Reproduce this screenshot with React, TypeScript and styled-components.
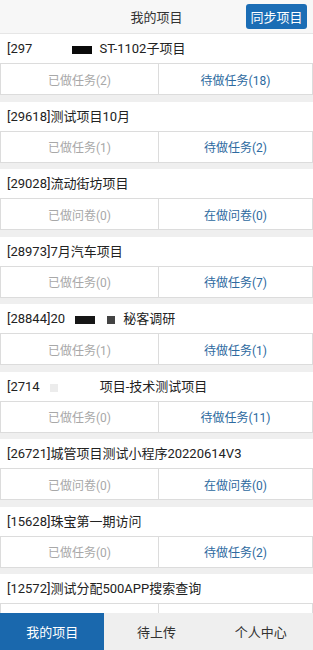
import React from 'react';
import { createGlobalStyle, styled } from 'styled-components';

const GlobalStyle = createGlobalStyle`
  html, body {
    margin: 0;
    padding: 0;
    background: #efefef;
  }
  body {
    font-family: Roboto, "Noto Sans CJK SC", "Noto Sans", sans-serif;
    -webkit-font-smoothing: antialiased;
  }
`;

// a title is text plus the masked-out blocks seen in the screenshot
type Part = string | { w: number; color: string; gap?: number; h?: number };

interface Project {
  title: Part[];
  done: string;
  todo: string;
}

const projects: Project[] = [
  {
    title: ['[297', { w: 20, h: 8, color: '#0a0a0a', gap: 40 }, { w: 0, color: 'transparent', gap: 4 }, ' ST-1102子项目'],
    done: '已做任务(2)',
    todo: '待做任务(18)',
  },
  { title: ['[29618]测试项目10月'], done: '已做任务(1)', todo: '待做任务(2)' },
  { title: ['[29028]流动街坊项目'], done: '已做问卷(0)', todo: '在做问卷(0)' },
  { title: ['[28973]7月汽车项目'], done: '已做任务(0)', todo: '待做任务(7)' },
  {
    title: [
      '[28844]20',
      { w: 20, h: 8, color: '#161616', gap: 10 },
      { w: 8, h: 8, color: '#444', gap: 12 },
      { w: 0, color: 'transparent', gap: 5 },
      ' 秘客调研',
    ],
    done: '已做任务(1)',
    todo: '待做任务(1)',
  },
  {
    title: ['[2714', { w: 8, h: 8, color: '#ececec', gap: 10 }, { w: 0, color: 'transparent', gap: 42 }, '项目-技术测试项目'],
    done: '已做任务(0)',
    todo: '待做任务(11)',
  },
  { title: ['[26721]城管项目测试小程序20220614V3'], done: '已做问卷(0)', todo: '在做问卷(0)' },
  { title: ['[15628]珠宝第一期访问'], done: '已做任务(0)', todo: '待做任务(2)' },
  { title: ['[12572]测试分配500APP搜索查询'], done: '已做任务(0)', todo: '待做任务(0)' },
];

const tabs = ['我的项目', '待上传', '个人中心'];

export default function App() {
  return (
    <>
      <GlobalStyle />
      <Page>
        <Header>
          <span />
          <HeaderTitle>我的项目</HeaderTitle>
          <SyncButton>同步项目</SyncButton>
        </Header>

        <List>
          {projects.map((p, i) => (
            <Card key={i}>
              <CardTitle>
                {p.title.map((part, j) =>
                  typeof part === 'string' ? (
                    <span key={j}>{part}</span>
                  ) : (
                    <Redact key={j} $w={part.w} $h={part.h ?? 8} $color={part.color} $gap={part.gap ?? 0} />
                  ),
                )}
              </CardTitle>
              <Actions>
                <Action>{p.done}</Action>
                <Action $active>{p.todo}</Action>
              </Actions>
            </Card>
          ))}
        </List>

        <TabBar>
          {tabs.map((t, i) => (
            <Tab key={t} $active={i === 0}>
              {t}
            </Tab>
          ))}
        </TabBar>
      </Page>
    </>
  );
}

const Page = styled.div`
  height: 100vh;
  display: flex;
  flex-direction: column;
  background: #efefef;
  overflow: hidden;
`;

const Header = styled.header`
  flex: 0 0 33px;
  display: grid;
  grid-template-columns: 1fr auto 1fr;
  align-items: center;
  background: #f7f7f7;
  border-bottom: 1px solid #e6e6e6;
`;

const HeaderTitle = styled.h1`
  margin: 0;
  font-size: 13px;
  font-weight: 400;
  color: #333;
`;

const SyncButton = styled.button`
  justify-self: end;
  margin-right: 6px;
  width: 61px;
  height: 25px;
  padding: 0;
  border: none;
  border-radius: 3px;
  background: #1b6db5;
  color: #fff;
  font-family: inherit;
  font-size: 13px;
`;

const List = styled.main`
  flex: 1;
  min-height: 0;
  overflow: hidden;
`;

const Card = styled.section`
  background: #fff;
  margin-bottom: 6.5px;
`;

const CardTitle = styled.div`
  height: 29px;
  line-height: 29px;
  padding: 0 7px;
  font-size: 13px;
  color: #222;
  white-space: nowrap;
  overflow: hidden;
`;

const Redact = styled.span<{ $w: number; $h: number; $color: string; $gap: number }>`
  display: inline-block;
  width: ${({ $w }) => $w}px;
  height: ${({ $h }) => $h}px;
  margin-left: ${({ $gap }) => $gap}px;
  background: ${({ $color }) => $color};
  vertical-align: -1px;
`;

const Actions = styled.div`
  display: grid;
  grid-template-columns: 157px 1fr;
  height: 32px;
  box-sizing: border-box;
  border: 1px solid #dcdcdc;
`;

const Action = styled.div<{ $active?: boolean }>`
  display: flex;
  align-items: center;
  justify-content: center;
  font-size: 12px;
  color: ${({ $active }) => ($active ? '#2d6aa0' : '#a8a8a8')};
  & + & {
    border-left: 1px solid #dcdcdc;
  }
`;

const TabBar = styled.nav`
  flex: 0 0 37px;
  display: grid;
  grid-template-columns: repeat(3, 1fr);
  background: #efefef;
`;

const Tab = styled.div<{ $active?: boolean }>`
  display: flex;
  align-items: center;
  justify-content: center;
  font-size: 13px;
  color: ${({ $active }) => ($active ? '#fff' : '#333')};
  background: ${({ $active }) => ($active ? '#1a68ad' : 'transparent')};
`;
